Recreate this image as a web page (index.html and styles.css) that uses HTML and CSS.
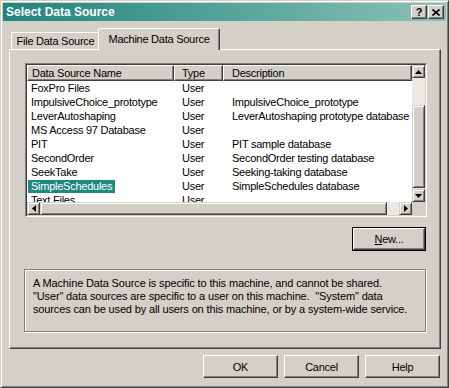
FILE: index.html
```html
<!DOCTYPE html>
<html lang="en">
<head>
    <meta charset="UTF-8">
    <title>Select Data Source</title>
    <link rel="stylesheet" href="styles.css">
</head>
<body>
<div class="window">
    <div class="titlebar">
        <span class="title">Select Data Source</span>
        <div class="caption-btns">
            <div class="cap cap-help">?</div>
            <div class="cap">
                <svg width="8" height="7" viewBox="0 0 8 7"><path d="M0.5 0.5 L7.5 6.5 M7.5 0.5 L0.5 6.5" stroke="#000" stroke-width="1.6"/></svg>
            </div>
        </div>
    </div>

    <div class="tabs">
        <div class="tab">File Data Source</div>
        <div class="tab active">Machine Data Source</div>
    </div>

    <div class="panel">
        <div class="list">
            <div class="list-view">
                <div class="list-head">
                    <div class="col-head c-name">Data Source Name</div>
                    <div class="col-head c-type">Type</div>
                    <div class="col-head c-desc">Description</div>
                </div>
                <div class="list-row"><span class="c-name"><span class="item">FoxPro Files</span></span><span class="c-type">User</span><span class="c-desc"></span></div>
                <div class="list-row"><span class="c-name"><span class="item">ImpulsiveChoice_prototype</span></span><span class="c-type">User</span><span class="c-desc">ImpulsiveChoice_prototype</span></div>
                <div class="list-row"><span class="c-name"><span class="item">LeverAutoshaping</span></span><span class="c-type">User</span><span class="c-desc">LeverAutoshaping prototype database</span></div>
                <div class="list-row"><span class="c-name"><span class="item">MS Access 97 Database</span></span><span class="c-type">User</span><span class="c-desc"></span></div>
                <div class="list-row"><span class="c-name"><span class="item">PIT</span></span><span class="c-type">User</span><span class="c-desc">PIT sample database</span></div>
                <div class="list-row"><span class="c-name"><span class="item">SecondOrder</span></span><span class="c-type">User</span><span class="c-desc">SecondOrder testing database</span></div>
                <div class="list-row"><span class="c-name"><span class="item">SeekTake</span></span><span class="c-type">User</span><span class="c-desc">Seeking-taking database</span></div>
                <div class="list-row"><span class="c-name"><span class="item selected">SimpleSchedules</span></span><span class="c-type">User</span><span class="c-desc">SimpleSchedules database</span></div>
                <div class="list-row"><span class="c-name"><span class="item">Text Files</span></span><span class="c-type">User</span><span class="c-desc"></span></div>
            </div>

            <div class="vscroll">
                <div class="sb-btn">
                    <svg width="7" height="4" viewBox="0 0 7 4"><polygon points="3.5,0 7,4 0,4" fill="#000"/></svg>
                </div>
                <div class="sb-track track-top"></div>
                <div class="sb-thumb v-thumb"></div>
                <div class="sb-track"></div>
                <div class="sb-btn">
                    <svg width="7" height="4" viewBox="0 0 7 4"><polygon points="0,0 7,0 3.5,4" fill="#000"/></svg>
                </div>
            </div>

            <div class="hscroll">
                <div class="sb-btn">
                    <svg width="4" height="7" viewBox="0 0 4 7"><polygon points="4,0 4,7 0,3.5" fill="#000"/></svg>
                </div>
                <div class="sb-thumb h-thumb"></div>
                <div class="sb-track"></div>
                <div class="sb-btn">
                    <svg width="4" height="7" viewBox="0 0 4 7"><polygon points="0,0 4,3.5 0,7" fill="#000"/></svg>
                </div>
            </div>

            <div class="corner"></div>
        </div>

        <div class="new-row">
            <div class="btn btn-default"><span class="btn-inner"><u>N</u>ew...</span></div>
        </div>

        <div class="note">
            A Machine Data Source is specific to this machine, and cannot be shared.<br>
            &quot;User&quot; data sources are specific to a user on this machine.&nbsp; &quot;System&quot; data<br>
            sources can be used by all users on this machine, or by a system-wide service.
        </div>
    </div>

    <div class="actions">
        <div class="btn">OK</div>
        <div class="btn">Cancel</div>
        <div class="btn">Help</div>
    </div>
</div>
</body>
</html>
```

FILE: styles.css
```css
* {
    margin: 0;
    padding: 0;
    box-sizing: border-box;
}

body {
    background-color: #d4d0c8;
    font-family: "Liberation Sans", Arial, sans-serif;
    font-size: 11px;
    letter-spacing: -0.25px;
    color: #000;
}

.window {
    display: flex;
    flex-direction: column;
    width: 449px;
    height: 388px;
    padding: 2px;
    border: 1px solid;
    border-color: #d4d0c8 #404040 #404040 #d4d0c8;
    box-shadow: inset 1px 1px 0 #fff, inset -1px -1px 0 #808080;
    background-color: #d4d0c8;
}

/* title bar */
.titlebar {
    display: flex;
    align-items: center;
    height: 18px;
    padding-left: 3px;
    background: linear-gradient(to right, #1f867e, #8ac1b6);
}

.title {
    color: #fff;
    font-size: 12px;
    font-weight: bold;
    letter-spacing: 0;
}

.caption-btns {
    display: flex;
    gap: 1px;
    margin-left: auto;
    margin-right: 2px;
}

.cap {
    display: flex;
    align-items: center;
    justify-content: center;
    width: 16px;
    height: 14px;
    border: 1px solid;
    border-color: #fff #404040 #404040 #fff;
    box-shadow: inset -1px -1px 0 #808080;
    background-color: #d4d0c8;
}

.cap-help {
    font-size: 11px;
    font-weight: bold;
    letter-spacing: 0;
    line-height: 12px;
}

/* tabs */
.tabs {
    display: flex;
    align-items: flex-end;
    height: 21px;
    margin-top: 7px;
    padding-left: 8px;
}

.tab {
    width: 89px;
    height: 17px;
    border-top: 1px solid #fff;
    border-left: 1px solid #fff;
    border-right: 1px solid #404040;
    border-radius: 2px 2px 0 0;
    box-shadow: inset -1px 0 0 #808080;
    background-color: #d4d0c8;
    line-height: 16px;
    text-align: center;
}

.tab.active {
    position: relative;
    z-index: 1;
    width: 122px;
    height: 22px;
    margin-left: -2px;
    margin-bottom: -1px;
    line-height: 20px;
}

/* tab page */
.panel {
    height: 300px;
    margin: 0 5px 0 6px;
    padding: 13px 0 0 15px;
    border: 1px solid;
    border-color: #fff #404040 #404040 #fff;
    box-shadow: inset -1px -1px 0 #808080;
}

.list {
    display: grid;
    grid-template-columns: 1fr 13px;
    grid-template-rows: 1fr 13px;
    width: 402px;
    height: 154px;
    padding: 1px;
    border: 1px solid;
    border-color: #808080 #fff #fff #808080;
    box-shadow: inset 1px 1px 0 #404040;
    background-color: #d4d0c8;
}

.list-view {
    overflow: hidden;
    background-color: #fff;
    white-space: nowrap;
}

.list-head {
    display: flex;
    height: 16px;
}

.col-head {
    height: 16px;
    border-top: 1px solid #fff;
    border-left: 1px solid #fff;
    border-right: 1px solid #404040;
    border-bottom: 1px solid #404040;
    box-shadow: inset -1px -1px 0 #808080;
    background-color: #d4d0c8;
    line-height: 14px;
}

.c-name {
    flex: none;
    width: 147px;
    padding-left: 1px;
}

.col-head.c-name {
    padding-left: 4px;
}

.c-type {
    flex: none;
    width: 49px;
    padding-left: 8px;
}

.col-head.c-type {
    padding-left: 7px;
}

.c-desc {
    flex: 1;
    padding-left: 9px;
}

.col-head.c-desc {
    padding-left: 8px;
}

.list-row {
    display: flex;
    height: 14px;
    line-height: 14px;
}

.item {
    display: inline-block;
    height: 13px;
    padding: 0 3px;
    line-height: 13px;
}

.item.selected {
    background-color: #1f8880;
    color: #fff;
}

/* scroll bars */
.vscroll {
    display: flex;
    flex-direction: column;
}

.hscroll {
    display: flex;
}

.sb-btn,
.sb-thumb {
    display: flex;
    align-items: center;
    justify-content: center;
    flex: none;
    border: 1px solid;
    border-color: #d4d0c8 #404040 #404040 #d4d0c8;
    box-shadow: inset 1px 1px 0 #fff, inset -1px -1px 0 #808080;
    background-color: #d4d0c8;
}

.sb-btn {
    width: 13px;
    height: 13px;
}

.sb-track {
    flex: 1;
    background-color: #ebe9e3;
}

.vscroll .track-top {
    flex: none;
    height: 27px;
}

.v-thumb {
    height: 83px;
}

.h-thumb {
    width: 347px;
}

.corner {
    background-color: #d4d0c8;
}

/* buttons */
.new-row {
    display: flex;
    justify-content: flex-end;
    margin-top: 10px;
    margin-right: 14px;
}

.btn {
    display: flex;
    align-items: center;
    justify-content: center;
    width: 75px;
    height: 23px;
    border: 1px solid;
    border-color: #fff #404040 #404040 #fff;
    box-shadow: inset -1px -1px 0 #808080;
    background-color: #d4d0c8;
}

.btn-default {
    width: 74px;
    height: 24px;
    border-color: #000;
    box-shadow: none;
}

.btn-inner {
    display: flex;
    align-items: center;
    justify-content: center;
    width: 100%;
    height: 100%;
    border: 1px solid;
    border-color: #fff #404040 #404040 #fff;
    box-shadow: inset -1px -1px 0 #808080;
}

.note {
    width: 402px;
    height: 63px;
    margin-top: 18px;
    margin-left: -1px;
    padding: 7px 0 0 8px;
    border: 1px solid #808080;
    box-shadow: inset 1px 1px 0 #fff, 1px 1px 0 #fff;
    line-height: 13px;
    letter-spacing: -0.14px;
}

.actions {
    display: flex;
    justify-content: flex-end;
    gap: 6px;
    margin-top: 6px;
    padding-right: 6px;
}
```
